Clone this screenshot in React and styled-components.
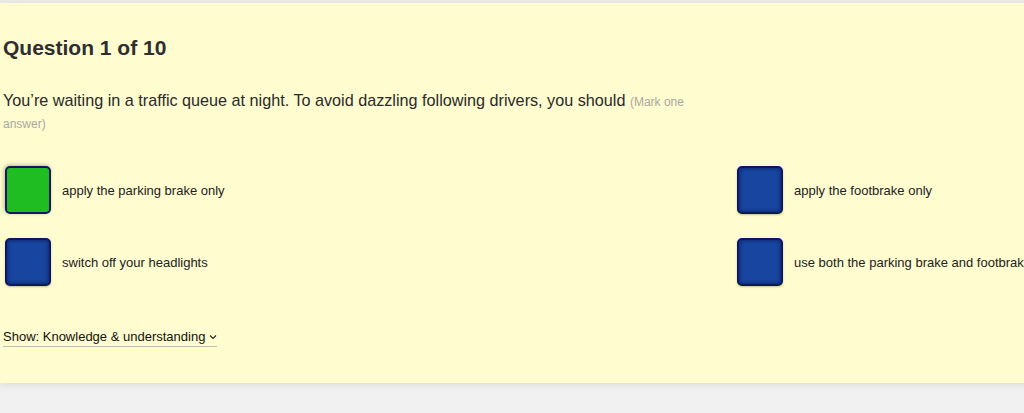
import React from 'react'
import styled, { createGlobalStyle } from 'styled-components'

const GlobalStyle = createGlobalStyle`
  html, body {
    margin: 0;
    padding: 0;
    background: #f1f1f1;
    overflow: hidden;
    font-family: "Liberation Sans", Arial, Helvetica, sans-serif;
  }
`

const Page = styled.div`
  padding-top: 3px;
  background: #ebebeb;
  height: 413px;
  box-sizing: border-box;
  display: flex;
  flex-direction: column;
`

const Panel = styled.section`
  width: 1470px;
  height: 380px;
  box-sizing: border-box;
  padding: 33px 3px 0;
  background: #fffccf;
  box-shadow: 0 2px 8px rgba(0, 0, 0, 0.09);
  position: relative;
  z-index: 1;
`

const Below = styled.div`
  flex: 1;
  background: #f1f1f1;
`

const Title = styled.h2`
  margin: 0;
  font-size: 21px;
  line-height: 24px;
  font-weight: 700;
  color: #2e2e2e;
`

const QuestionText = styled.p`
  margin: 30px 0 0;
  width: 700px;
  font-size: 16.2px;
  line-height: 20px;
  color: #2a2a2a;
`

const Hint = styled.span`
  font-size: 12px;
  color: #a9a9a0;
`

const Options = styled.div`
  display: grid;
  grid-template-columns: 732px 732px;
  row-gap: 24px;
  margin-top: 32px;
  padding-left: 2px;
`

const Option = styled.label`
  display: flex;
  align-items: center;
  gap: 11px;
  cursor: pointer;
`

const Box = styled.span`
  width: 46px;
  height: 48px;
  box-sizing: border-box;
  border: 2px solid #0e1760;
  border-radius: 5px;
  background: ${p => (p.$selected ? '#1fbd21' : '#1745a0')};
  box-shadow: ${p =>
    p.$selected
      ? '-1px -1px 4px rgba(60, 60, 40, 0.35)'
      : 'inset 0 0 4px rgba(5, 15, 70, 0.7), 0 1px 2px rgba(0, 0, 0, 0.25)'};
  flex-shrink: 0;
`

const OptionText = styled.span`
  font-size: 13px;
  color: #222;
  white-space: nowrap;
`

const Footer = styled.div`
  margin-top: 41px;
`

const ShowToggle = styled.button`
  display: inline-flex;
  align-items: center;
  gap: 4px;
  padding: 0 0 2px;
  background: none;
  border: none;
  border-bottom: 1px solid #bdbdb0;
  font-family: inherit;
  font-size: 13px;
  color: #111;
  cursor: pointer;
`

const options = [
  { text: 'apply the parking brake only', selected: true },
  { text: 'apply the footbrake only' },
  { text: 'switch off your headlights' },
  { text: 'use both the parking brake and footbrake' },
]

export default function App() {
  return (
    <Page>
      <GlobalStyle />
      <Panel>
        <Title>Question 1 of 10</Title>
        <QuestionText>
          You’re waiting in a traffic queue at night. To avoid dazzling following drivers, you should{' '}
          <Hint>(Mark one answer)</Hint>
        </QuestionText>
        <Options>
          {options.map(o => (
            <Option key={o.text}>
              <Box $selected={o.selected} />
              <OptionText>{o.text}</OptionText>
            </Option>
          ))}
        </Options>
        <Footer>
          <ShowToggle>
            Show: Knowledge &amp; understanding
            <svg width="8" height="6" viewBox="0 0 8 6">
              <path d="M1 1.5 L4 4.5 L7 1.5" fill="none" stroke="#222" strokeWidth="1.1" />
            </svg>
          </ShowToggle>
        </Footer>
      </Panel>
      <Below />
    </Page>
  )
}
